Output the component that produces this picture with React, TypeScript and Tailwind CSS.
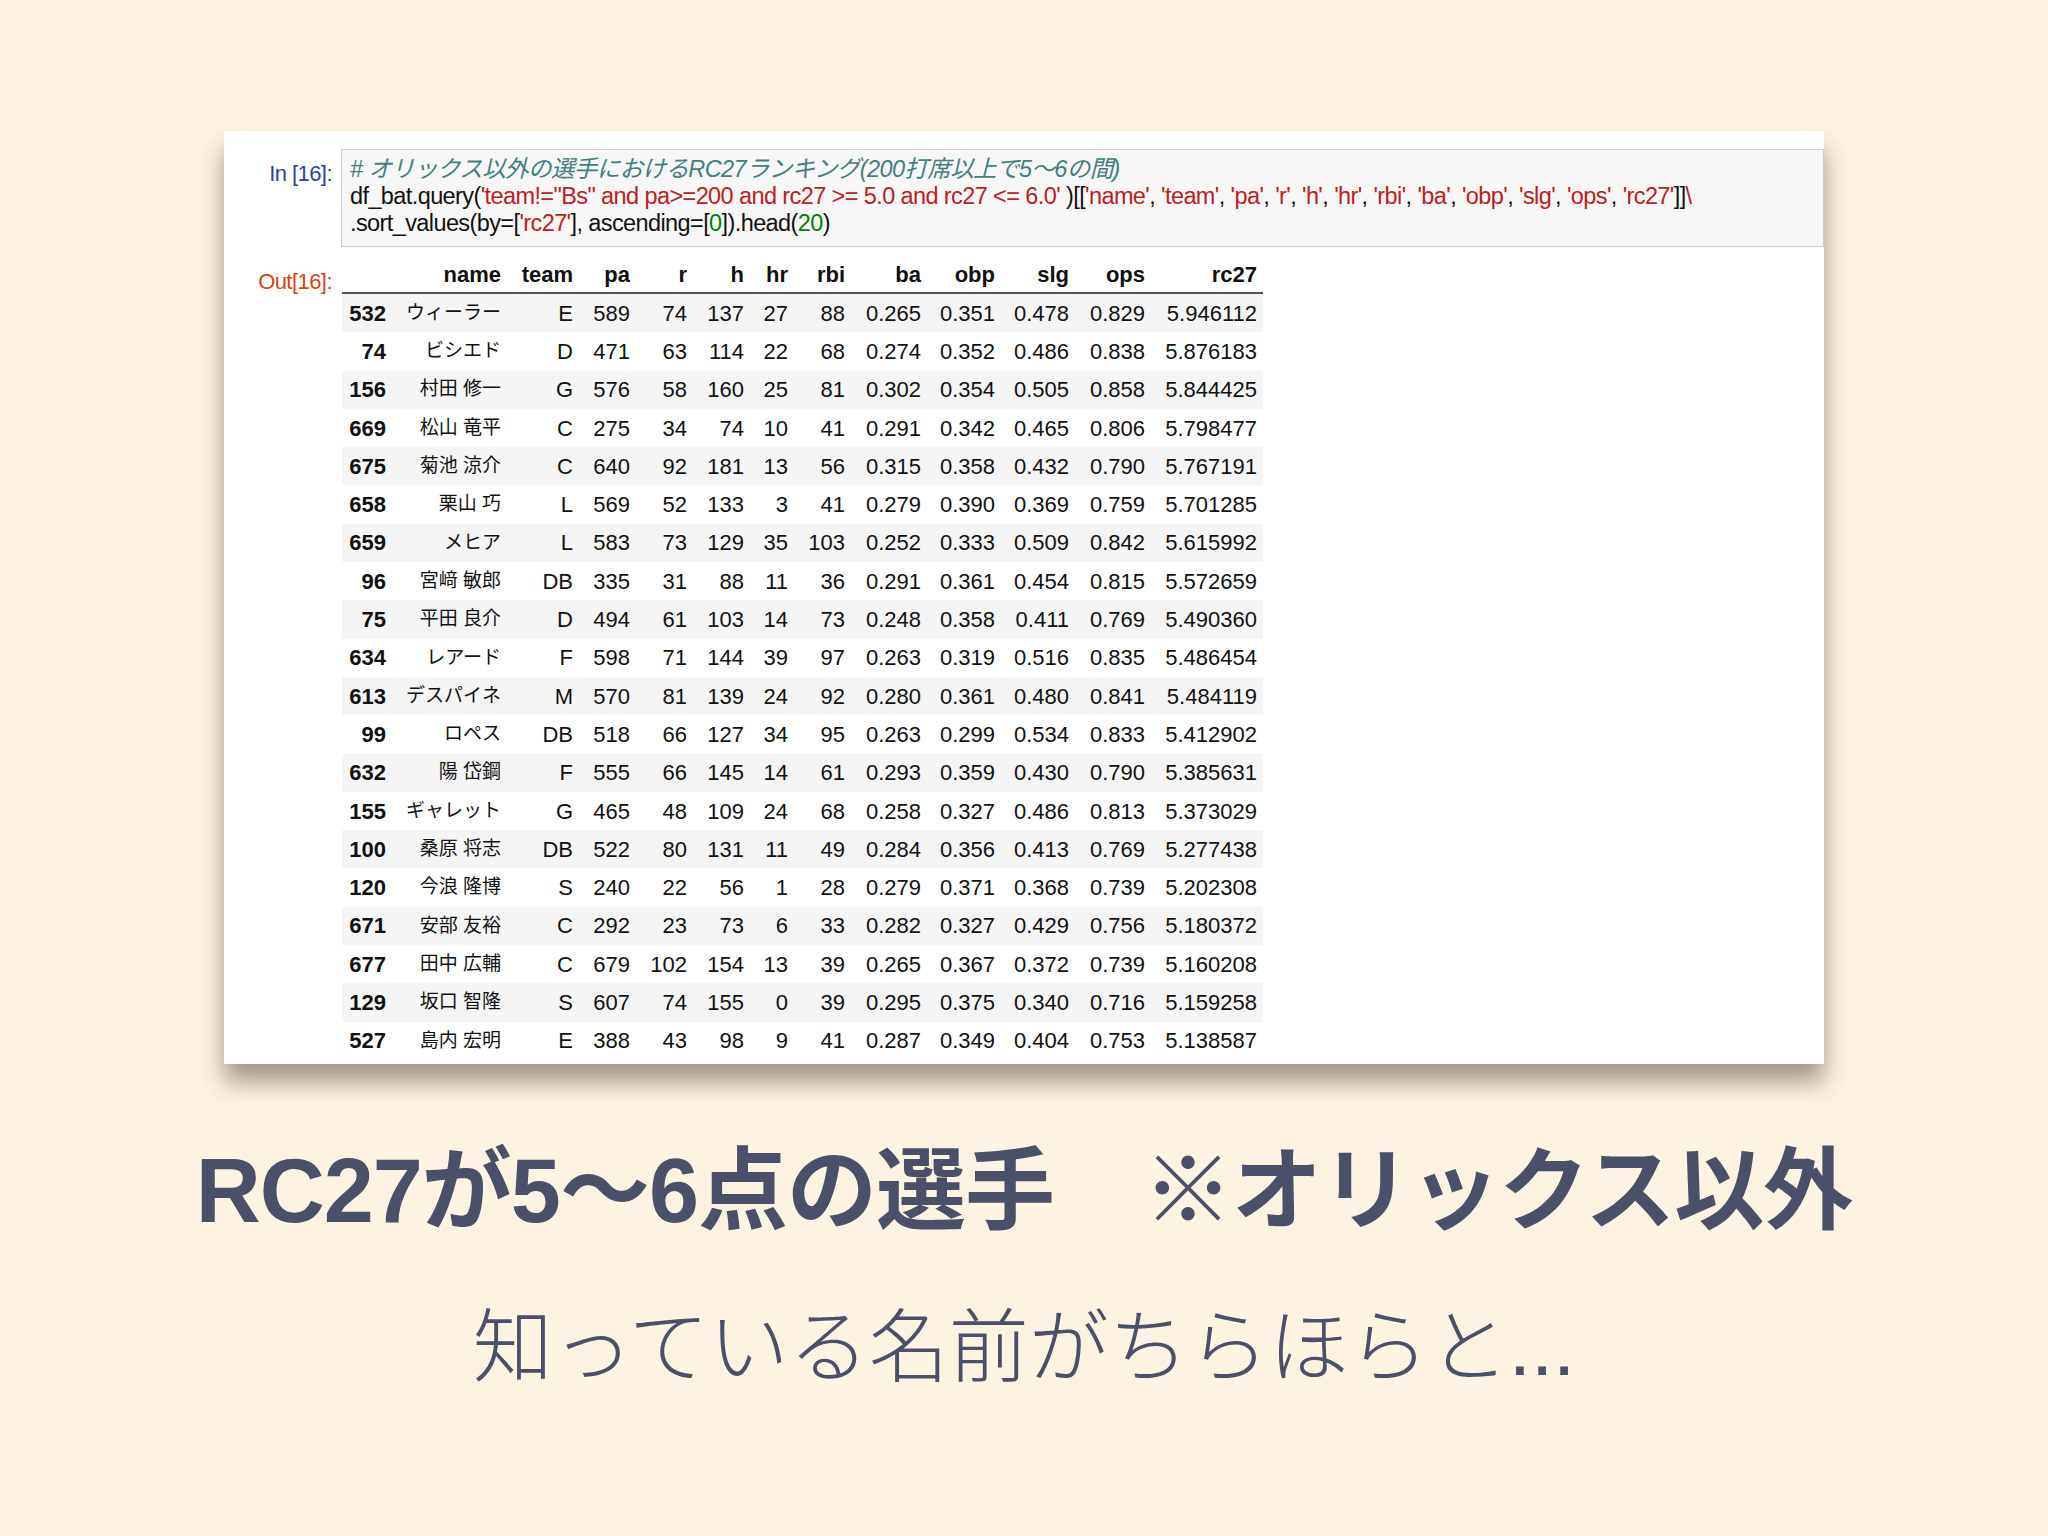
import React from 'react';

const rows: [string, string, string, number, number, number, number, number, string, string, string, string, string][] = [
  ['532', 'ウィーラー', 'E', 589, 74, 137, 27, 88, '0.265', '0.351', '0.478', '0.829', '5.946112'],
  ['74', 'ビシエド', 'D', 471, 63, 114, 22, 68, '0.274', '0.352', '0.486', '0.838', '5.876183'],
  ['156', '村田 修一', 'G', 576, 58, 160, 25, 81, '0.302', '0.354', '0.505', '0.858', '5.844425'],
  ['669', '松山 竜平', 'C', 275, 34, 74, 10, 41, '0.291', '0.342', '0.465', '0.806', '5.798477'],
  ['675', '菊池 涼介', 'C', 640, 92, 181, 13, 56, '0.315', '0.358', '0.432', '0.790', '5.767191'],
  ['658', '栗山 巧', 'L', 569, 52, 133, 3, 41, '0.279', '0.390', '0.369', '0.759', '5.701285'],
  ['659', 'メヒア', 'L', 583, 73, 129, 35, 103, '0.252', '0.333', '0.509', '0.842', '5.615992'],
  ['96', '宮﨑 敏郎', 'DB', 335, 31, 88, 11, 36, '0.291', '0.361', '0.454', '0.815', '5.572659'],
  ['75', '平田 良介', 'D', 494, 61, 103, 14, 73, '0.248', '0.358', '0.411', '0.769', '5.490360'],
  ['634', 'レアード', 'F', 598, 71, 144, 39, 97, '0.263', '0.319', '0.516', '0.835', '5.486454'],
  ['613', 'デスパイネ', 'M', 570, 81, 139, 24, 92, '0.280', '0.361', '0.480', '0.841', '5.484119'],
  ['99', 'ロペス', 'DB', 518, 66, 127, 34, 95, '0.263', '0.299', '0.534', '0.833', '5.412902'],
  ['632', '陽 岱鋼', 'F', 555, 66, 145, 14, 61, '0.293', '0.359', '0.430', '0.790', '5.385631'],
  ['155', 'ギャレット', 'G', 465, 48, 109, 24, 68, '0.258', '0.327', '0.486', '0.813', '5.373029'],
  ['100', '桑原 将志', 'DB', 522, 80, 131, 11, 49, '0.284', '0.356', '0.413', '0.769', '5.277438'],
  ['120', '今浪 隆博', 'S', 240, 22, 56, 1, 28, '0.279', '0.371', '0.368', '0.739', '5.202308'],
  ['671', '安部 友裕', 'C', 292, 23, 73, 6, 33, '0.282', '0.327', '0.429', '0.756', '5.180372'],
  ['677', '田中 広輔', 'C', 679, 102, 154, 13, 39, '0.265', '0.367', '0.372', '0.739', '5.160208'],
  ['129', '坂口 智隆', 'S', 607, 74, 155, 0, 39, '0.295', '0.375', '0.340', '0.716', '5.159258'],
  ['527', '島内 宏明', 'E', 388, 43, 98, 9, 41, '0.287', '0.349', '0.404', '0.753', '5.138587'],
];

const headers = ['', 'name', 'team', 'pa', 'r', 'h', 'hr', 'rbi', 'ba', 'obp', 'slg', 'ops', 'rc27'];
const widths = ['w-[50px]', 'w-[115px]', 'w-[72px]', 'w-[57px]', 'w-[57px]', 'w-[57px]', 'w-[44px]', 'w-[57px]', 'w-[76px]', 'w-[74px]', 'w-[74px]', 'w-[76px]', 'w-[112px]'];

const R = ({ children }: { children: React.ReactNode }) => <span className="text-[#ba2121]">{children}</span>;

export default function App() {
  return (
    <div className="w-[2048px] h-[1536px] bg-[#fdf3e3] flex flex-col items-center" style={{ fontFamily: '"Liberation Sans", "Noto Sans CJK JP", sans-serif' }}>
      {/* notebook screenshot */}
      <div className="mt-[131px] w-[1600px] h-[933px] bg-white shadow-[0_18px_22px_rgba(60,40,20,0.45)] pt-[18px] text-[22px] text-[#111] overflow-hidden">
        <div className="flex">
          <div className="w-[117px] text-right pr-[9px] pt-[8px] text-[#303f9f] tracking-tight">In [16]:</div>
          <div className="flex-1 bg-[#f7f7f7] border border-[#cfcfcf] px-[8px] py-[6px] h-[98px] leading-[27px] text-[23.5px] tracking-[-0.6px] whitespace-nowrap overflow-hidden">
            <div className="italic text-[#408080]"># オリックス以外の選手におけるRC27ランキング(200打席以上で5〜6の間)</div>
            <div>df_bat.query(<R>'team!="Bs" and pa&gt;=200 and rc27 &gt;= 5.0 and rc27 &lt;= 6.0'</R> )[[<R>'name'</R>, <R>'team'</R>, <R>'pa'</R>, <R>'r'</R>, <R>'h'</R>, <R>'hr'</R>, <R>'rbi'</R>, <R>'ba'</R>, <R>'obp'</R>, <R>'slg'</R>, <R>'ops'</R>, <R>'rc27'</R>]]<R>\</R></div>
            <div>.sort_values(by=[<R>'rc27'</R>], ascending=[<span className="text-[#008000]">0</span>]).head(<span className="text-[#008000]">20</span>)</div>
          </div>
        </div>
        <div className="flex mt-[10px]">
          <div className="w-[117px] text-right pr-[9px] pt-[8px] text-[#d84315] tracking-tight">Out[16]:</div>
          <div className="pl-[1px]">
            <div className="flex h-[37px] items-center border-b-2 border-[#555] font-bold">
              {headers.map((h, i) => (
                <div key={i} className={`${widths[i]} text-right pr-[6px]`}>{h}</div>
              ))}
            </div>
            {rows.map((r, ri) => (
              <div key={ri} className={`flex h-[38.3px] items-center ${ri % 2 === 0 ? 'bg-[#f5f5f5]' : 'bg-white'}`}>
                {r.map((c, i) => (
                  <div key={i} className={`${widths[i]} text-right pr-[6px] whitespace-nowrap ${i === 0 ? 'font-bold' : ''} ${i === 1 ? 'text-[19px]' : ''}`}>{c}</div>
                ))}
              </div>
            ))}
          </div>
        </div>
      </div>

      <div className="mt-[82px] text-[90px] font-bold text-[#4a5068] tracking-[-1px] leading-none whitespace-nowrap">
        RC27が5〜6点の選手　※オリックス以外
      </div>
      <div className="mt-[72px] text-[80px] font-light text-[#4a5068] leading-none whitespace-nowrap">
        知っている名前がちらほらと...
      </div>
    </div>
  );
}
